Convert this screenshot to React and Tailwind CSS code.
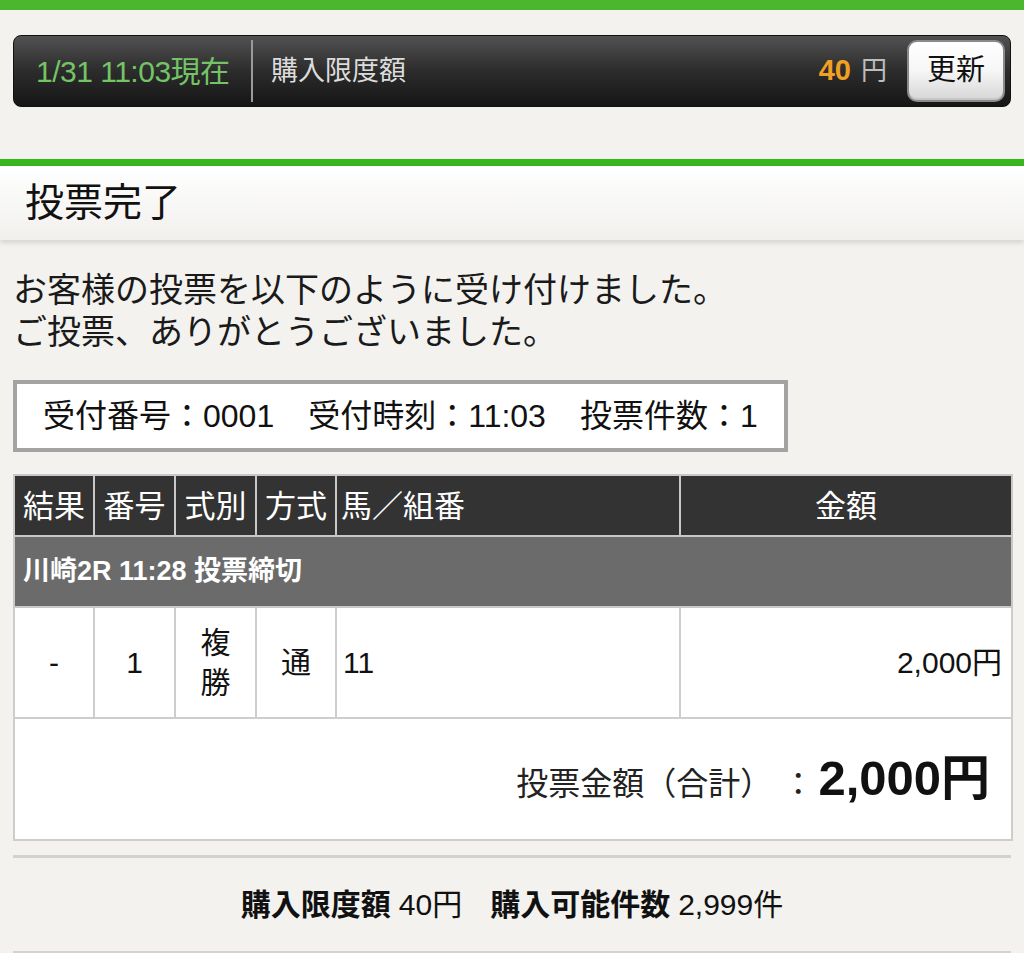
import React from 'react';

const font = { fontFamily: '"Liberation Sans", "Noto Sans CJK JP", sans-serif' };

const headers = [
  { label: '結果', w: 'w-[80px]' },
  { label: '番号', w: 'w-[81px]' },
  { label: '式別', w: 'w-[81px]' },
  { label: '方式', w: 'w-[80px]' },
  { label: '馬／組番', w: 'w-[344px]' },
  { label: '金額', w: 'w-[332px]' },
];

export default function App() {
  return (
    <div
      className="min-h-screen bg-[#f3f2ef] text-[#1a1a1a] font-['Liberation_Sans','Noto_Sans_CJK_JP',sans-serif]"
      style={font}
    >
      <div className="h-[10px] bg-[#4bb72c]" />

      {/* status bar */}
      <div className="px-[13px] pt-[25px]">
        <div className="flex h-[72px] items-center rounded-[8px] border border-[#111] bg-gradient-to-b from-[#525252] via-[#2c2c2c] to-[#161616] pl-[22px] pr-[5px]">
          <span className="w-[215px] text-[30px] tracking-[-0.5px] text-[#74c466]">1/31 11:03現在</span>
          <span className="h-[62px] w-[2px] bg-[#9a9a9a]" />
          <span className="ml-[18px] flex-1 text-[27px] text-[#dcdcdc]">購入限度額</span>
          <span className="text-[29px] font-bold text-[#f2a024]">40</span>
          <span className="ml-[10px] text-[26px] text-[#bdbdbd]">円</span>
          <button className="ml-[20px] flex h-[62px] w-[98px] items-center justify-center rounded-[10px] border-2 border-[#8a8a8a] bg-gradient-to-b from-white via-[#f6f6f6] to-[#d6d6d6] text-[29px] text-[#111] shadow-[inset_0_-2px_0_rgba(0,0,0,0.08)]">
            更新
          </button>
        </div>
      </div>

      <div className="mt-[52px] h-[7px] bg-[#38b71d]" />
      <div className="flex h-[74px] items-center bg-gradient-to-b from-white to-[#f1f0ed] pl-[25px] shadow-[0_3px_5px_rgba(0,0,0,0.12)]">
        <h1 className="text-[39px] font-normal text-[#111]">投票完了</h1>
      </div>

      <div className="px-[13px] pt-[29px]">
        <p className="text-[34px] leading-[42px] text-[#1a1a1a]">
          お客様の投票を以下のように受け付けました。
          <br />
          ご投票、ありがとうございました。
        </p>

        <div className="mt-[27px] inline-flex h-[72px] w-[775px] items-center border-[4px] border-[#a3a3a3] bg-white pl-[26px] text-[32px] text-[#111]">
          <span>受付番号：0001</span>
          <span className="ml-[34px]">受付時刻：11:03</span>
          <span className="ml-[34px]">投票件数：1</span>
        </div>

        <table className="mt-[22px] w-full table-fixed border-collapse border-2 border-[#cdcdcd] bg-white">
          <thead>
            <tr className="h-[61px] bg-[#333333] text-[31px] text-white">
              {headers.map((h, i) => (
                <th
                  key={h.label}
                  className={`${h.w} border-2 border-[#c8c8c8] px-[4px] pt-[4px] font-normal ${i === 4 ? 'text-left' : 'text-center'}`}
                >
                  {h.label}
                </th>
              ))}
            </tr>
          </thead>
          <tbody>
            <tr className="h-[71px] bg-[#6b6b6b]">
              <td colSpan={6} className="border-2 border-[#c8c8c8] pl-[8px] text-[27px] font-bold text-white">
                川崎2R 11:28 投票締切
              </td>
            </tr>
            <tr className="h-[111px] text-[30px] text-[#111]">
              <td className="border-2 border-[#cdcdcd] text-center">-</td>
              <td className="border-2 border-[#cdcdcd] text-center">1</td>
              <td className="border-2 border-[#cdcdcd] text-center leading-[40px]">
                複<br />勝
              </td>
              <td className="border-2 border-[#cdcdcd] text-center">通</td>
              <td className="border-2 border-[#cdcdcd] pl-[6px]">11</td>
              <td className="border-2 border-[#cdcdcd] pr-[9px] text-right">2,000円</td>
            </tr>
            <tr className="h-[122px]">
              <td colSpan={6} className="border-2 border-[#cdcdcd] pr-[21px] text-right">
                <span className="text-[32px] text-[#222]">投票金額（合計）</span>
                <span className="ml-[26px] text-[32px] text-[#222]">：</span>
                <span className="ml-[4px] text-[49px] font-bold text-[#111]">2,000円</span>
              </td>
            </tr>
          </tbody>
        </table>

        <div className="mt-[14px] h-[3px] bg-[#d2d2d2]" />
        <div className="flex h-[93px] items-center justify-center text-[30px] text-[#111]">
          <span className="font-bold">購入限度額</span>
          <span className="ml-[8px]">40円</span>
          <span className="ml-[28px] font-bold">購入可能件数</span>
          <span className="ml-[8px]">2,999件</span>
        </div>
        <div className="h-[3px] bg-[#d2d2d2]" />
      </div>
    </div>
  );
}
